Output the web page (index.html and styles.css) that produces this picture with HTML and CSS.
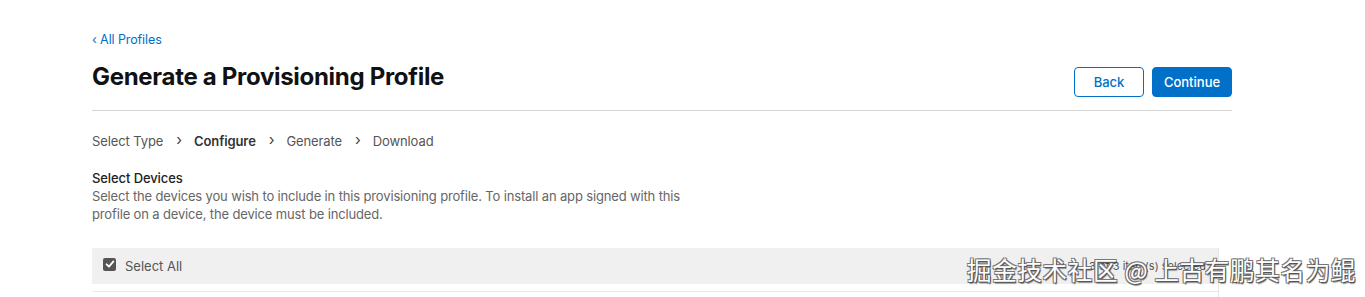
FILE: index.html
```html
<!DOCTYPE html>
<html lang="en">
<head>
<meta charset="utf-8">
<title>Generate a Provisioning Profile</title>
<link rel="stylesheet" href="styles.css">
</head>
<body>
<div class="page">
  <a class="back-link" href="#">‹ All Profiles</a>
  <div class="header">
    <h1 class="title">Generate a Provisioning Profile</h1>
    <div class="actions">
      <button class="btn btn-secondary">Back</button>
      <button class="btn btn-primary">Continue</button>
    </div>
  </div>
  <nav class="steps">
    <span class="step">Select Type</span>
    <span class="chev">›</span>
    <span class="step step-current">Configure</span>
    <span class="chev">›</span>
    <span class="step">Generate</span>
    <span class="chev">›</span>
    <span class="step">Download</span>
  </nav>
  <section class="section">
    <h2 class="section-title">Select Devices</h2>
    <p class="section-desc">Select the devices you wish to include in this provisioning profile. To install an app signed with this profile on a device, the device must be included.</p>
  </section>
  <div class="table-wrap">
    <div class="table">
      <div class="select-bar">
        <label class="check-label"><span class="checkbox"><svg viewBox="0 0 12 12" width="12" height="12"><path d="M2.6 6.3 L5 8.6 L9.4 3.4" fill="none" stroke="#fff" stroke-width="1.8" stroke-linecap="round" stroke-linejoin="round"/></svg></span>Select All</label>
        <span class="count">3 of 3 item(s) selected</span>
      </div>
      <div class="row"></div>
    </div>
    <div class="side"></div>
  </div>
</div>
<div class="watermark">掘金技术社区 @ 上古有鹏其名为鲲</div>
</body>
</html>
```
FILE: styles.css
```css
* { box-sizing: border-box; }
html, body { margin: 0; padding: 0; }
body {
  background: #fff;
  font-family: Inter, "Noto Sans", "Liberation Sans", sans-serif;
  color: #333;
  overflow: hidden;
  height: 297px;
  position: relative;
}
.page {
  width: 1140px;
  margin-left: 92px;
  padding-top: 31px;
}
.back-link {
  display: block;
  font-size: 12.5px;
  line-height: 17px;
  color: #0070c9;
  text-decoration: none;
  letter-spacing: -0.1px;
}
.header {
  display: flex;
  justify-content: space-between;
  align-items: flex-start;
  border-bottom: 1px solid #d6d6d6;
  padding-bottom: 13px;
  margin-top: 14px;
}
.title {
  margin: 0;
  font-size: 24px;
  font-weight: 700;
  line-height: 30px;
  color: #111;
  letter-spacing: -0.3px;
}
.actions { display: flex; gap: 8px; margin-top: 5px; }
.btn {
  font-family: inherit;
  font-size: 13px;
  height: 30px;
  border-radius: 4px;
  padding: 0 10px;
  cursor: pointer;
  font-weight: 500;
}
.btn-secondary {
  width: 70px;
  background: #fff;
  color: #0070c9;
  border: 1px solid #0070c9;
}
.btn-primary {
  width: 80px;
  background: #0070c9;
  color: #fff;
  border: 1px solid #0070c9;
}
.steps {
  display: flex;
  align-items: center;
  margin-top: 21px;
  font-size: 13px;
  line-height: 18px;
  color: #555;
  letter-spacing: -0.1px;
}
.step { color: #555; }
.step-current { font-weight: 600; color: #333; }
.chev { margin: 0 12px 0 13px; font-size: 15px; color: #444; position: relative; top: -1px; }
.section { margin-top: 19px; }
.section-title {
  margin: 0;
  font-size: 13px;
  font-weight: 500;
  line-height: 18px;
  color: #222;
  letter-spacing: -0.1px;
}
.section-desc {
  margin: 0;
  width: 600px;
  font-size: 13px;
  line-height: 18px;
  color: #666;
  letter-spacing: -0.15px;
}
.table-wrap {
  display: flex;
  margin-top: 25px;
}
.table { width: 1126px; }
.side {
  width: 14px;
  border-left: 1px solid #e6e6e6;
  height: 60px;
}
.select-bar {
  height: 36px;
  background: #f0f0f0;
  display: flex;
  align-items: center;
  justify-content: space-between;
  padding: 0 12px 0 11px;
}
.check-label {
  display: flex;
  align-items: center;
  font-size: 13px;
  color: #555;
}
.checkbox {
  width: 13px;
  height: 13px;
  background: #555;
  border-radius: 2px;
  margin-right: 9px;
  display: flex;
  align-items: center;
  justify-content: center;
  position: relative;
  top: -2px;
}
.checkbox svg { display: block; }
.count { font-size: 11px; color: #555; }
.row {
  height: 8px;
  border-bottom: 1px solid #e8e8e8;
}
.watermark {
  position: absolute;
  left: 967px;
  top: 254px;
  font-family: "Noto Sans CJK SC", sans-serif;
  font-size: 24.5px;
  line-height: 32px;
  color: #fff;
  letter-spacing: 0.7px;
  white-space: nowrap;
  text-shadow: 1px 1px 0 #555, -1px -1px 0 #777, 1px -1px 0 #777, -1px 1px 0 #777, 1px 2px 1px rgba(0,0,0,0.4);
}
```
